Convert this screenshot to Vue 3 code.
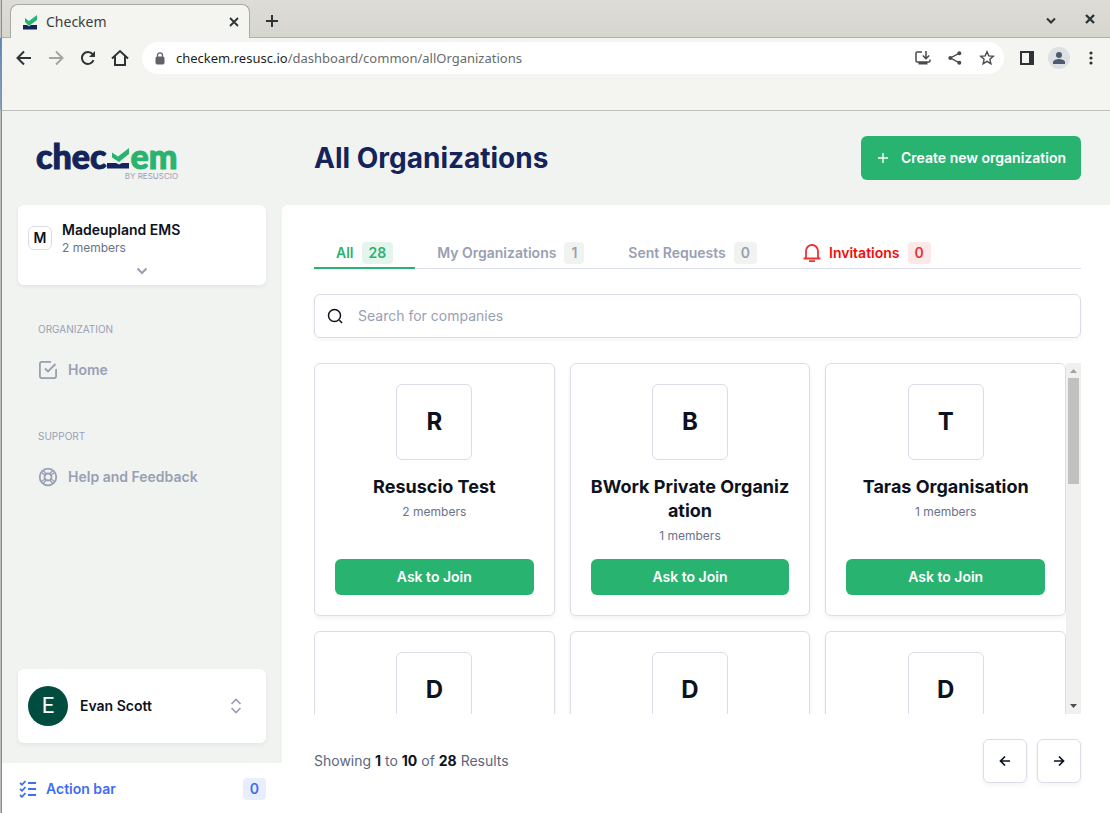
<script setup>
import { ref } from 'vue'

const tabs = ref([
  { label: 'All', count: 28, kind: 'active' },
  { label: 'My Organizations', count: 1, kind: '' },
  { label: 'Sent Requests', count: 0, kind: '' },
  { label: 'Invitations', count: 0, kind: 'alert' },
])

const organizations = ref([
  { initial: 'R', name: 'Resuscio Test', members: 2 },
  { initial: 'B', name: 'BWork Private Organization', members: 1 },
  { initial: 'T', name: 'Taras Organisation', members: 1 },
  { initial: 'D' },
  { initial: 'D' },
  { initial: 'D' },
])
const search = ref('')
</script>

<template>
  <div class="desktop">
    <div class="window">
      <header class="chrome">
        <div class="tabstrip">
          <div class="browser-tab">
            <svg class="favicon" width="16" height="16" viewBox="0 0 16 16"><path d="M3 4l4 3 8-6v5L7 12 3 8z" fill="#29b370" /><path d="M1 11h4l2 1.500L9 11h6v4.500H1z" fill="#14235a" /></svg>
            <span class="tab-title">Checkem</span>
            <button class="plain" aria-label="Close tab"><svg width="10" height="10" viewBox="0 0 10 10"><path d="M1 1l8 8M9 1L1 9" stroke="#2e3436" stroke-width="1.800" /></svg></button>
          </div>
          <button class="plain new-tab" aria-label="New tab"><svg width="12" height="12" viewBox="0 0 12 12"><path d="M6 0v12M0 6h12" stroke="#2e3436" stroke-width="2" /></svg></button>
          <div class="window-controls">
            <button class="plain tab-search" aria-label="Search tabs"><svg width="10" height="8" viewBox="0 0 10 8"><path d="M1 1.500l4 4 4-4" fill="none" stroke="#2e3436" stroke-width="2" /></svg></button>
            <button class="plain" aria-label="Close window"><svg width="10" height="10" viewBox="0 0 10 10"><path d="M1 1l8 8M9 1L1 9" stroke="#2e3436" stroke-width="2.400" /></svg></button>
          </div>
        </div>
        <div class="toolbar">
          <button class="plain" aria-label="Back"><svg width="16" height="16" viewBox="0 0 16 16"><path d="M15 8H2M8 1.500L1.500 8 8 14.500" fill="none" stroke="#2e3436" stroke-width="2" /></svg></button>
          <button class="plain" aria-label="Forward"><svg width="16" height="16" viewBox="0 0 16 16"><path d="M1 8h13M8 1.500L14.500 8 8 14.500" fill="none" stroke="#a3a5a3" stroke-width="2" /></svg></button>
          <button class="plain" aria-label="Reload"><svg width="16" height="16" viewBox="0 0 16 16"><path d="M13.500 10.200A6 6 0 1 1 12.600 4.200L14 5.600" fill="none" stroke="#2e3436" stroke-width="2" /><path d="M15 1v6H9z" fill="#2e3436" /></svg></button>
          <button class="plain" aria-label="Home page"><svg width="18" height="18" viewBox="0 0 18 18"><path d="M1 9.500L9 2l8 7.500M4 7.500V16h10V7.500" fill="none" stroke="#2e3436" stroke-width="2" /></svg></button>
          <div class="address">
            <svg width="10" height="13" viewBox="0 0 10 13"><rect x="1" y="5" width="8" height="7" rx="1" fill="#5f6368" stroke="#5f6368" /><path d="M2.500 5V3.300a2.500 2.500 0 0 1 5 0V5" fill="none" stroke="#5f6368" stroke-width="1.300" /></svg>
            <span class="url">checkem.resusc.io<span class="path">/dashboard/common/allOrganizations</span></span>
            <button class="plain" aria-label="Install"><svg width="16" height="16" viewBox="0 0 16 16" fill="none" stroke="#4a4a4a" stroke-width="1.500"><path d="M7 2H2.200C1.500 2 1 2.500 1 3.200v7.600c0 .7.500 1.200 1.200 1.200h11.600c.7 0 1.200-.5 1.200-1.200V9.500M11 1v7M7.800 5.500L11 8.700l3.200-3.200" /><path d="M3.500 12h9v2.500h-9z" fill="#4a4a4a" stroke="none" /></svg></button>
            <button class="plain" aria-label="Share"><svg width="14" height="14" viewBox="0 0 14 14"><path d="M11.500 2.200L2.500 7l9 4.800" fill="none" stroke="#4a4a4a" stroke-width="1.400" /><g fill="#4a4a4a"><circle cx="11.300" cy="2.300" r="2" /><circle cx="2.300" cy="7" r="2" /><circle cx="11.300" cy="11.700" r="2" /></g></svg></button>
            <button class="plain" aria-label="Bookmark"><svg width="16" height="16" viewBox="0 0 16 16"><path d="M8 1.800l1.800 4.100 4.500.4-3.400 3 1 4.400L8 11.400l-3.900 2.300 1-4.400-3.400-3 4.500-.4z" fill="none" stroke="#4a4a4a" stroke-width="1.400" /></svg></button>
          </div>
          <button class="plain" aria-label="Side panel"><svg width="14" height="14" viewBox="0 0 14 14"><path d="M1 1h12v12H1z" fill="none" stroke="#2e3436" stroke-width="2" /><path d="M9 1h4v12H9z" fill="#2e3436" /></svg></button>
          <button class="plain person" aria-label="Profile"><svg width="12" height="12" viewBox="0 0 12 12" fill="#4d5b70"><circle cx="6" cy="3" r="3" /><path d="M0 12v-2c0-2 4-3 6-3s6 1 6 3v2z" /></svg></button>
          <button class="plain" aria-label="Menu"><svg width="4" height="14" viewBox="0 0 4 14" fill="#2e3436"><circle cx="2" cy="2" r="1.600" /><circle cx="2" cy="7" r="1.600" /><circle cx="2" cy="12" r="1.600" /></svg></button>
        </div>
      </header>

      <div class="app">
        <aside class="sidebar">
          <div class="side-main">
            <div class="logo">
              <div class="wordmark">
                <span>chec</span>
                <svg width="22" height="21" viewBox="0 0 22 21"><path d="M5 4.500l6 4L22 0v6L12 14 5 9.500z" fill="#29b370" /><path d="M0 15h9l3 1.500 3-1.500h7v5.500H0z" fill="#14235a" /></svg>
                <span class="green">em</span>
              </div>
              <small>BY RESUSCIO</small>
            </div>

            <button class="panel org-switch">
              <span class="org-row">
                <span class="org-letter">M</span>
                <span class="org-text"><strong>Madeupland EMS</strong><span class="org-members">2 members</span></span>
              </span>
              <svg class="org-chevron" width="12" height="8" viewBox="0 0 12 8"><path d="M1.500 1.500L6 6l4.500-4.500" fill="none" stroke="#98a0b3" stroke-width="2" /></svg>
            </button>

            <nav class="nav">
              <h2>ORGANIZATION</h2>
              <a href="#home"><svg width="20" height="20" viewBox="0 0 20 20" fill="none" stroke="#98a0b3" stroke-width="1.800"><path d="M13 1.900H4A2.200 2.200 0 0 0 1.900 4v12A2.200 2.200 0 0 0 4 18.100h12a2.200 2.200 0 0 0 2.100-2.100V9" /><path d="M7 8.500l3 3 7.500-7.500" /></svg>Home</a>
              <h2>SUPPORT</h2>
              <a href="#help"><svg width="20" height="20" viewBox="0 0 20 20" fill="none" stroke="#98a0b3" stroke-width="1.800"><circle cx="10" cy="10" r="8.300" /><circle cx="10" cy="10" r="3.500" /><path d="M3.500 5.500l4 3M5.500 3.500l3 4M16.500 5.500l-4 3M14.500 3.500l-3 4M3.500 14.500l4-3M5.500 16.500l3-4M16.500 14.500l-4-3M14.500 16.500l-3-4" stroke-width="1.400" /></svg>Help and Feedback</a>
            </nav>

            <button class="panel user">
              <span class="avatar">E</span>
              <strong>Evan Scott</strong>
              <svg width="12" height="16" viewBox="0 0 12 16"><path d="M1.500 6L6 1.500 10.500 6M1.500 10L6 14.500 10.500 10" fill="none" stroke="#98a0b3" stroke-width="1.700" /></svg>
            </button>
          </div>
          <button class="action-bar">
            <svg width="18" height="18" viewBox="0 0 18 18" fill="none" stroke="#3f6df6" stroke-width="1.800"><path d="M9 3h8M9 9h8M9 15h8M1 3l2 1.800L6.500 1M1 9l2 1.800L6.500 7M1 15l2 1.800L6.500 13" /></svg>
            <span>Action bar</span>
            <span class="badge">0</span>
          </button>
        </aside>

        <main class="main">
          <div class="title-row">
            <h1>All Organizations</h1>
            <button class="primary create"><svg width="12" height="12" viewBox="0 0 12 12"><path d="M6 1v10M1 6h10" stroke="#fff" stroke-width="1.400" /></svg>Create new organization</button>
          </div>
          <section class="content">
            <div class="tabs" role="tablist">
              <button v-for="tab in tabs" :key="tab.label" role="tab" :class="['tab', tab.kind]">
                <svg v-if="tab.kind === 'alert'" width="18" height="18" viewBox="0 0 18 18" fill="none" stroke="#ea3434" stroke-width="1.800"><path d="M3 14.500V7a6 6 0 0 1 12 0v7.500M.5 14.500h17M6 17.200h6" /></svg>
                {{ tab.label }}<span class="badge">{{ tab.count }}</span>
              </button>
            </div>
            <label class="search">
              <svg width="18" height="18" viewBox="0 0 18 18" fill="none" stroke="#0d1220" stroke-width="1.500"><circle cx="7.500" cy="8.500" r="6" /><path d="M12.400 13.200L15 16" /></svg>
              <input v-model="search" type="text" aria-label="Search for companies" placeholder="Search for companies" />
            </label>
            <div class="list">
              <div class="cards">
                <article v-for="(org, i) in organizations" :key="i" class="card">
                  <div class="initial">{{ org.initial }}</div>
                  <template v-if="org.name">
                    <h3>{{ org.name }}</h3>
                    <p>{{ org.members }} members</p>
                    <button class="primary join">Ask to Join</button>
                  </template>
                </article>
              </div>
              <div class="scrollbar">
                <svg width="7" height="4" viewBox="0 0 7 4"><path d="M3.500 0L7 4H0z" fill="#a2a2a0" /></svg>
                <div class="track"><div class="thumb"></div></div>
                <svg width="7" height="4" viewBox="0 0 7 4"><path d="M0 0h7L3.500 4z" fill="#4d4d4c" /></svg>
              </div>
            </div>
            <footer class="pager">
              <p>Showing <b>1</b> to <b>10</b> of <b>28</b> Results</p>
              <button aria-label="Previous page"><svg width="12" height="12" viewBox="0 0 12 12" fill="none" stroke="#0d1220" stroke-width="1.700"><path d="M11 6H2M6 1.500L1.500 6 6 10.500" /></svg></button>
              <button aria-label="Next page"><svg width="12" height="12" viewBox="0 0 12 12" fill="none" stroke="#0d1220" stroke-width="1.700"><path d="M1 6h9M6 1.500L10.500 6 6 10.500" /></svg></button>
            </footer>
          </section>
        </main>
      </div>
    </div>
  </div>
</template>

<style>
body { margin: 0; }
</style>

<style scoped>
* { box-sizing: border-box; }
h1, h2, h3, p { margin: 0; }
button { font: inherit; color: inherit; border: 0; background: none; padding: 0; cursor: pointer; }
svg { display: block; flex: none; }
.desktop { height: 100vh; padding-left: 1px; background: linear-gradient(#c9c9c5 38px, #5c83b4 38px, #8fa4b8 110px, #bcbdba 110px); font-family: Inter, "Liberation Sans", sans-serif; font-size: 14px; line-height: 20px; color: #0d1220; }
.window { height: 100%; display: flex; flex-direction: column; border-left: 1px solid #8b8d8b; background: #f4f5f0; }

.chrome { height: 111px; flex: none; border-bottom: 1px solid #bebfba; font-family: "Noto Sans", sans-serif; }
.plain { display: flex; align-items: center; justify-content: center; }
.tabstrip { display: flex; height: 38px; background: linear-gradient(#dddcd8, #d6d5ce); box-shadow: inset 0 -1px #b0b0ab; }
.browser-tab { display: flex; align-items: center; width: 240px; height: 34px; margin: 4px 0 0 8px; padding: 0 10px 0 11px; background: #f4f5f0; border: 1px solid #a9aaa5; border-bottom: 0; border-radius: 8px 8px 0 0; }
.tab-title { flex: 1; margin-left: 8px; color: #3b4042; }
.new-tab { margin: 4px 0 0 14px; width: 16px; }
.window-controls { display: flex; align-items: center; gap: 29px; margin-left: auto; padding-right: 15px; }
.tab-search { padding-top: 4px; }
.toolbar { display: flex; align-items: center; height: 40px; padding: 0 11px 0 14px; gap: 16px; }
.toolbar .plain { width: 16px; flex: none; }
.address { flex: 1; display: flex; align-items: center; gap: 16px; height: 32px; padding: 0 9px 0 13px; margin: 0 -1px 0 -2px; border-radius: 16px; background: #fff; }
.url { flex: 1; font-size: 13px; color: #1d1f20; margin-left: -5px; }
.path { color: #686b6c; }
.toolbar .person { width: 22px; height: 22px; border-radius: 50%; background: #dde1e4; margin: 0 -3px; }

.app { flex: 1; min-height: 0; display: flex; background: #f1f3f1; }
.sidebar { width: 280px; flex: none; display: flex; flex-direction: column; }
.side-main { flex: 1; display: flex; flex-direction: column; padding: 30px 16px 20px; }
.logo { width: 142px; height: 64px; margin-left: 18px; color: #14235a; }
.wordmark { display: flex; align-items: baseline; gap: 1px; height: 30px; line-height: 30px; font-family: Lato, sans-serif; font-weight: 900; font-size: 34px; -webkit-text-stroke: 1px #14235a; }
.green { color: #29b370; -webkit-text-stroke-color: #29b370; }
.logo small { display: block; text-align: right; font-size: 8px; line-height: 10px; color: #98a0b3; }
.panel { display: flex; background: #fff; border-radius: 6px; box-shadow: 0 2px 4px #1820300f; text-align: left; }
.org-switch { flex-direction: column; height: 80px; padding: 15px 10px 10px; }
.org-row { display: flex; align-items: center; gap: 10px; }
.org-letter { width: 24px; height: 24px; border: 1px solid #dadde7; border-radius: 6px; text-align: center; font-weight: 600; line-height: 22px; }
.org-text { display: flex; flex-direction: column; }
.org-text strong, .user strong { font-weight: 600; }
.org-members { font-size: 12px; line-height: 15px; color: #6a7289; }
.org-chevron { align-self: center; margin-top: 12px; }
.nav { padding: 36px 20px 0; }
.nav h2 { font-size: 10px; font-weight: 400; line-height: 16px; color: #98a0b3; margin-bottom: 23px; }
.nav a { display: flex; align-items: center; gap: 10px; height: 20px; margin-bottom: 48px; color: #98a0b3; font-weight: 600; text-decoration: none; }
.user { align-items: center; height: 74px; margin-top: auto; padding: 0 24px 0 10px; }
.user strong { flex: 1; margin-left: 12px; }
.avatar { width: 40px; height: 40px; border-radius: 50%; background: #004d40; color: #fff; font: 22px/40px Roboto, sans-serif; text-align: center; }
.action-bar { display: flex; align-items: center; height: 50px; padding: 2px 16px 0 17px; background: #fff; color: #3f6df6; font-weight: 600; text-align: left; }
.action-bar span:first-of-type { flex: 1; margin-left: 9px; }
.badge { height: 22px; padding: 0 7px; border-radius: 4px; line-height: 22px; background: #f1f3f1; }
.action-bar .badge { background: #e9eefe; }

.main { flex: 1; min-width: 0; display: flex; flex-direction: column; }
.title-row { display: flex; align-items: center; justify-content: space-between; height: 94px; padding: 0 29px 0 32px; }
h1 { font-size: 28px; line-height: 36px; font-weight: 700; color: #14235a; }
.primary { display: flex; align-items: center; justify-content: center; background: #29b370; color: #fff; font-weight: 600; border-radius: 6px; }
.create { height: 44px; padding: 0 15px 0 16px; gap: 12px; }
.content { flex: 1; min-height: 0; display: flex; flex-direction: column; padding: 31px 29px 30px 32px; background: #fff; border-radius: 6px 0 0 0; }
.tabs { display: flex; height: 33px; border-bottom: 1px solid #dadde7; }
.tab { display: flex; align-items: center; gap: 8px; height: 33px; padding: 2px 22px 0; font-weight: 600; color: #98a0b3; border-bottom: 2px solid transparent; }
.tab.active { color: #29b370; border-color: #29b370; }
.active .badge { background: #e5f5ed; }
.tab.alert { color: #f50a0a; padding-left: 24px; }
.alert .badge { background: #fce8e8; color: #ea3434; }
.search { display: flex; align-items: center; height: 44px; flex: none; margin-top: 25px; padding: 0 12px; gap: 13px; border: 1px solid #dadde7; border-radius: 6px; box-shadow: 0 2px 4px #1820300d; }
.search input { flex: 1; height: 20px; border: 0; padding: 0; outline: 0; background: none; font: inherit; color: inherit; }
.search input::placeholder { color: #98a0b3; opacity: 1; }
.list { flex: 1; min-height: 0; display: flex; margin-top: 25px; overflow: hidden; }
.cards { flex: 1; display: grid; grid-template-columns: repeat(3, 1fr); grid-auto-rows: 253px; gap: 15px; }
.card { display: flex; flex-direction: column; align-items: center; min-width: 0; padding: 20px; border: 1px solid #dadde7; border-radius: 6px; box-shadow: 0 2px 4px #1820300f; text-align: center; }
.initial { width: 76px; height: 76px; flex: none; border: 1px solid #dadde7; border-radius: 6px; font-size: 24px; font-weight: 700; line-height: 74px; }
.card h3 { width: 100%; margin-top: 15px; font-size: 18px; line-height: 24px; font-weight: 700; word-break: break-all; }
.card p { margin-top: 5px; font-size: 12px; line-height: 16px; color: #6a7289; }
.join { width: 100%; height: 36px; margin-top: auto; }
.scrollbar { width: 15px; display: flex; flex-direction: column; align-items: center; padding: 6px 0; background: #f0f0ef; }
.track { flex: 1; width: 11px; padding: 5px 0; }
.thumb { height: 33%; background: #c1c1bf; }
.pager { display: flex; align-items: center; gap: 10px; height: 44px; margin-top: 25px; color: #5d667c; }
.pager p { flex: 1; }
.pager b { color: #0d1220; font-weight: 700; }
.pager button { display: flex; align-items: center; justify-content: center; width: 44px; height: 44px; border: 1px solid #dadde7; border-radius: 6px; box-shadow: 0 2px 4px #1820300f; }
</style>
